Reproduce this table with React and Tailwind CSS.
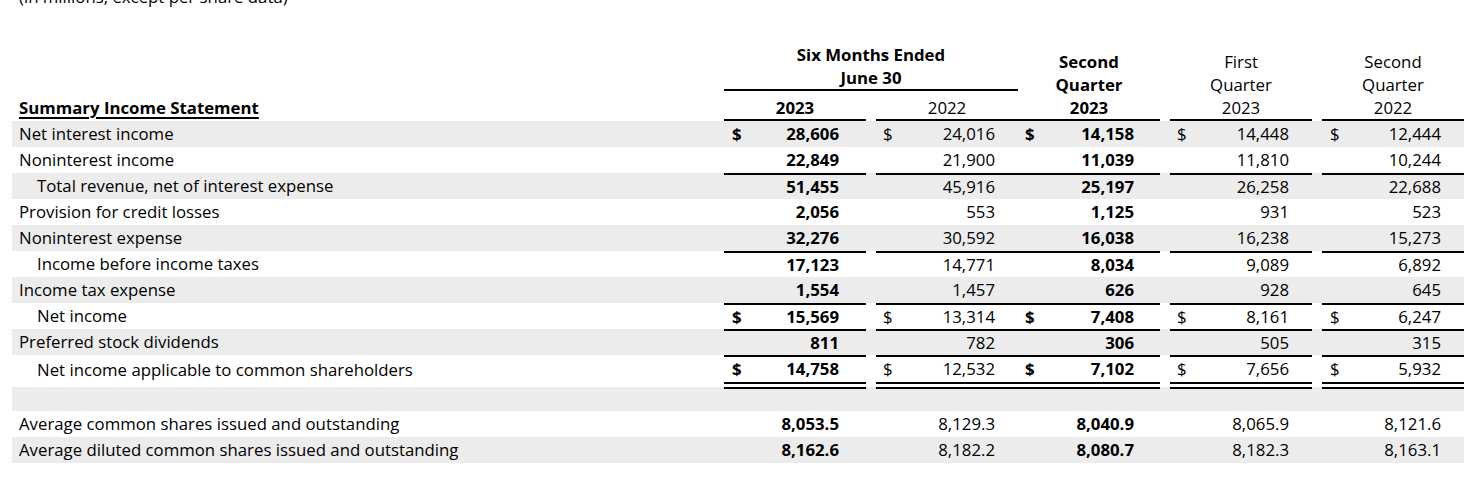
import React from "react";

const GRID = "grid w-[1452px] grid-cols-[712px_142px_10px_142px_142px_10px_142px_10px_142px]";

const COLS = [
  { bold: true, pr: "pr-[27px]", pl: "pl-[8px]" },
  { bold: false, pr: "pr-[23px]", pl: "pl-[7px]" },
  { bold: true, pr: "pr-[26px]", pl: "pl-[7px]" },
  { bold: false, pr: "pr-[23px]", pl: "pl-[7px]" },
  { bold: false, pr: "pr-[23px]", pl: "pl-[8px]" },
];

const rows = [
  { label: "Net interest income", v: ["28,606", "24,016", "14,158", "14,448", "12,444"], dollar: true, gray: true },
  { label: "Noninterest income", v: ["22,849", "21,900", "11,039", "11,810", "10,244"] },
  { label: "Total revenue, net of interest expense", v: ["51,455", "45,916", "25,197", "26,258", "22,688"], indent: true, top: true, gray: true },
  { label: "Provision for credit losses", v: ["2,056", "553", "1,125", "931", "523"] },
  { label: "Noninterest expense", v: ["32,276", "30,592", "16,038", "16,238", "15,273"], gray: true },
  { label: "Income before income taxes", v: ["17,123", "14,771", "8,034", "9,089", "6,892"], indent: true, top: true },
  { label: "Income tax expense", v: ["1,554", "1,457", "626", "928", "645"], gray: true },
  { label: "Net income", v: ["15,569", "13,314", "7,408", "8,161", "6,247"], indent: true, top: true, dollar: true },
  { label: "Preferred stock dividends", v: ["811", "782", "306", "505", "315"], top: true, gray: true },
  { label: "Net income applicable to common shareholders", v: ["14,758", "12,532", "7,102", "7,656", "5,932"], indent: true, top: true, dollar: true, last: true },
];

const shares = [
  { label: "Average common shares issued and outstanding", v: ["8,053.5", "8,129.3", "8,040.9", "8,065.9", "8,121.6"] },
  { label: "Average diluted common shares issued and outstanding", v: ["8,162.6", "8,182.2", "8,080.7", "8,182.3", "8,163.1"], gray: true },
];

const COL_START = ["col-start-2", "col-start-4", "col-start-5", "col-start-7", "col-start-9"];

function Cell({ i, value, dollar, top, last }) {
  const c = COLS[i];
  return (
    <div
      className={[
        COL_START[i],
        "flex items-center justify-between pb-[2px]",
        c.bold ? "font-bold" : "font-normal",
        top ? "border-t-2 border-black" : "",
        last ? "border-b-[7px] border-double border-black" : "",
      ].join(" ")}
    >
      <span className={c.pl}>{dollar ? "$" : ""}</span>
      <span className={c.pr}>{value}</span>
    </div>
  );
}

function Row({ r, h = "h-[26px]" }) {
  return (
    <div className={`${GRID} ${h} ${r.gray ? "bg-[#ececec]" : "bg-white"}`}>
      <div className={`col-start-1 flex items-center pb-[2px] ${r.last ? "pb-[6px]" : ""} ${r.indent ? "pl-[25px]" : "pl-[7px]"}`}>{r.label}</div>
      {r.v.map((val, i) => (
        <Cell key={i} i={i} value={val} dollar={r.dollar} top={r.top} last={r.last} />
      ))}
    </div>
  );
}

export default function App() {
  return (
    <div
      className="w-[1482px] h-[484px] bg-white overflow-hidden text-black text-[16.8px] leading-[23px] pl-[12px]"
      style={{ fontFamily: '"Open Sans", "Noto Sans", sans-serif' }}
    >
      <div className="-mt-[14px] h-[22px] leading-[22px] pl-[7px]">(in millions, except per share data)</div>
      <div className={`${GRID} mt-[35px]`}>
        <div className="col-start-2 col-end-5 row-start-1 border-b-2 border-black text-center font-bold">
          <div>Six Months Ended</div>
          <div>June 30</div>
        </div>
        <div className="col-start-1 row-start-2 self-end pl-[7px] pt-[5px] pb-[2px] font-bold">
          <span className="underline decoration-2 underline-offset-[3px]">Summary Income Statement</span>
        </div>
        <div className="col-start-2 row-start-2 pt-[5px] border-b-2 border-black text-center font-bold">2023</div>
        <div className="col-start-4 row-start-2 pt-[5px] border-b-2 border-black text-center">2022</div>
        <div className="col-start-5 row-start-1 row-span-2 self-end border-b-2 border-black text-center font-bold">
          <div>Second</div>
          <div>Quarter</div>
          <div>2023</div>
        </div>
        <div className="col-start-7 row-start-1 row-span-2 self-end border-b-2 border-black text-center">
          <div>First</div>
          <div>Quarter</div>
          <div>2023</div>
        </div>
        <div className="col-start-9 row-start-1 row-span-2 self-end border-b-2 border-black text-center">
          <div>Second</div>
          <div>Quarter</div>
          <div>2022</div>
        </div>
      </div>
      {rows.map((r, idx) => (
        <Row key={idx} r={r} h={r.last ? "h-[32px]" : "h-[26px]"} />
      ))}
      <div className="h-[24px] w-[1452px] bg-[#ececec]" />
      {shares.map((r, idx) => (
        <Row key={idx} r={r} />
      ))}
    </div>
  );
}
